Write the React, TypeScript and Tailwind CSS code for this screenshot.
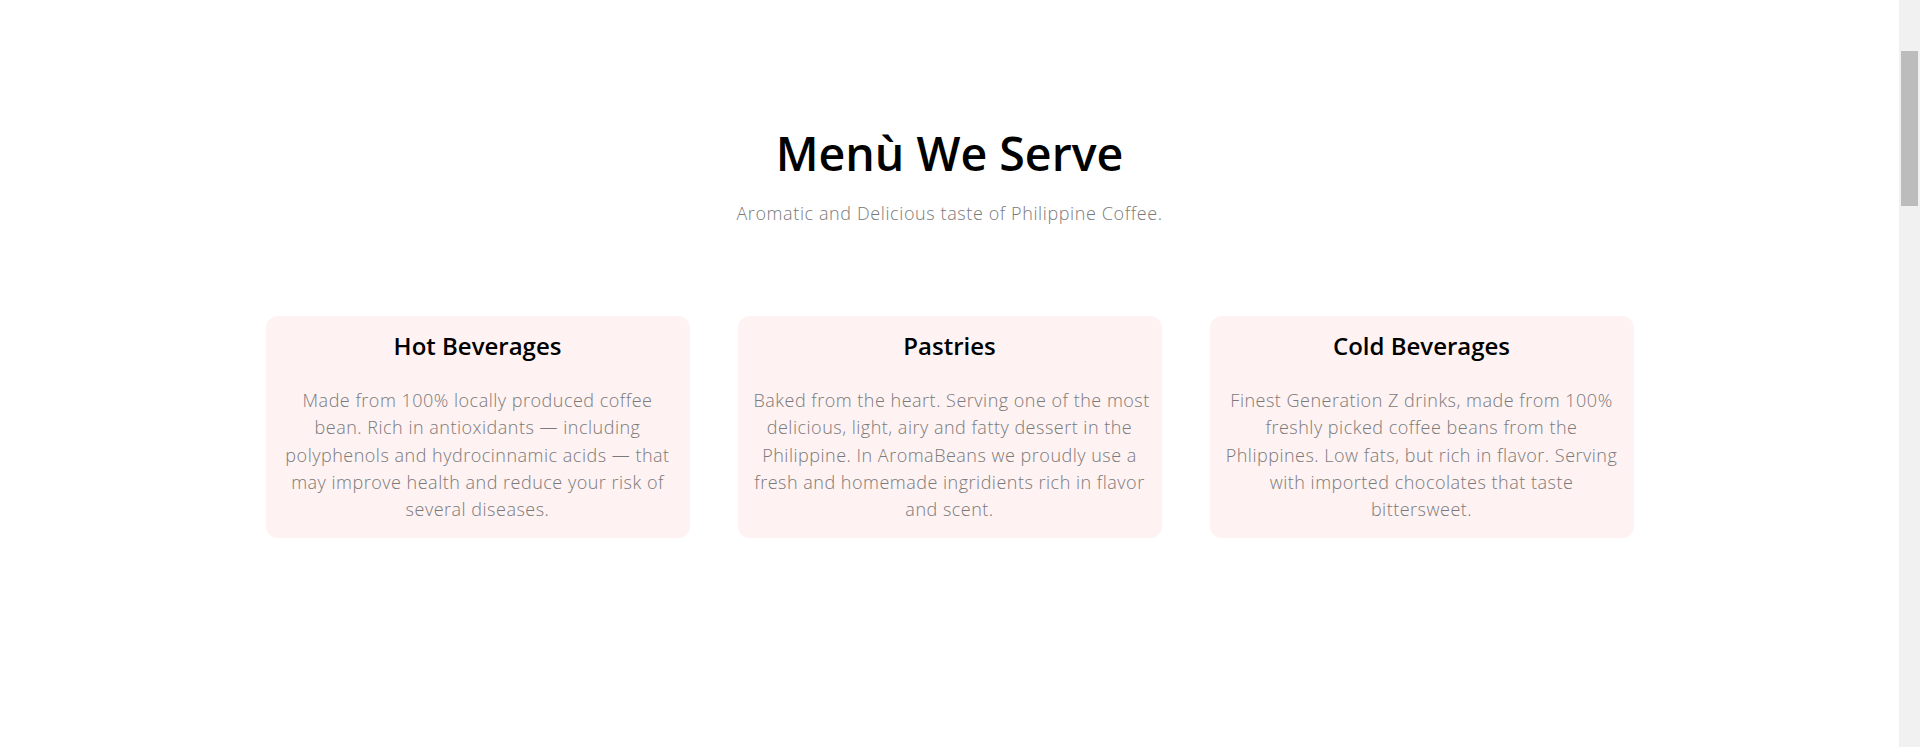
const cards = [
  {
    title: 'Hot Beverages',
    lines: [
      'Made from 100% locally produced coffee',
      'bean. Rich in antioxidants — including',
      'polyphenols and hydrocinnamic acids — that',
      'may improve health and reduce your risk of',
      'several diseases.',
    ],
  },
  {
    title: 'Pastries',
    lines: [
      'Baked from the heart. Serving one of the most',
      'delicious, light, airy and fatty dessert in the',
      'Philippine. In AromaBeans we proudly use a',
      'fresh and homemade ingridients rich in flavor',
      'and scent.',
    ],
  },
  {
    title: 'Cold Beverages',
    lines: [
      'Finest Generation Z drinks, made from 100%',
      'freshly picked coffee beans from the',
      'Phlippines. Low fats, but rich in flavor. Serving',
      'with imported chocolates that taste',
      'bittersweet.',
    ],
  },
]

function MenuCard({ title, lines }: { title: string; lines: string[] }) {
  return (
    <div className="bg-[#fef2f2] rounded-[12px] px-4 pt-3 pb-[15px] text-center">
      <h3 className="text-[24px] leading-[36px] font-semibold text-black">{title}</h3>
      <p className="mt-[23px] text-[18px] leading-[27.3px] tracking-[0.5px] font-light text-[#7a7a7a] whitespace-nowrap">
        {lines.map((l, i) => (
          <span key={i} className="block">{l}</span>
        ))}
      </p>
    </div>
  )
}

export default function App() {
  return (
    <div className="flex h-[747px] bg-white overflow-hidden" style={{ fontFamily: '"Open Sans", "Liberation Sans", sans-serif' }}>
      <section className="flex-1 pt-[125px] text-center">
        <h2 className="text-[46.5px] leading-[56px] font-semibold text-black">Menù We Serve</h2>
        <p className="mt-[19px] text-[18px] leading-[27px] tracking-[0.6px] font-light text-[#7a7a7a]">
          Aromatic and Delicious taste of Philippine Coffee.
        </p>
        <div className="w-[1368px] mx-auto mt-[89px] grid grid-cols-3 gap-12">
          {cards.map((c) => (
            <MenuCard key={c.title} title={c.title} lines={c.lines} />
          ))}
        </div>
      </section>
      {/* page scrollbar */}
      <div className="w-[21px] shrink-0 bg-[#f1f1f1] pt-[51px] px-[2px]">
        <div className="h-[155px] bg-[#bcbcbc]" />
      </div>
    </div>
  )
}
